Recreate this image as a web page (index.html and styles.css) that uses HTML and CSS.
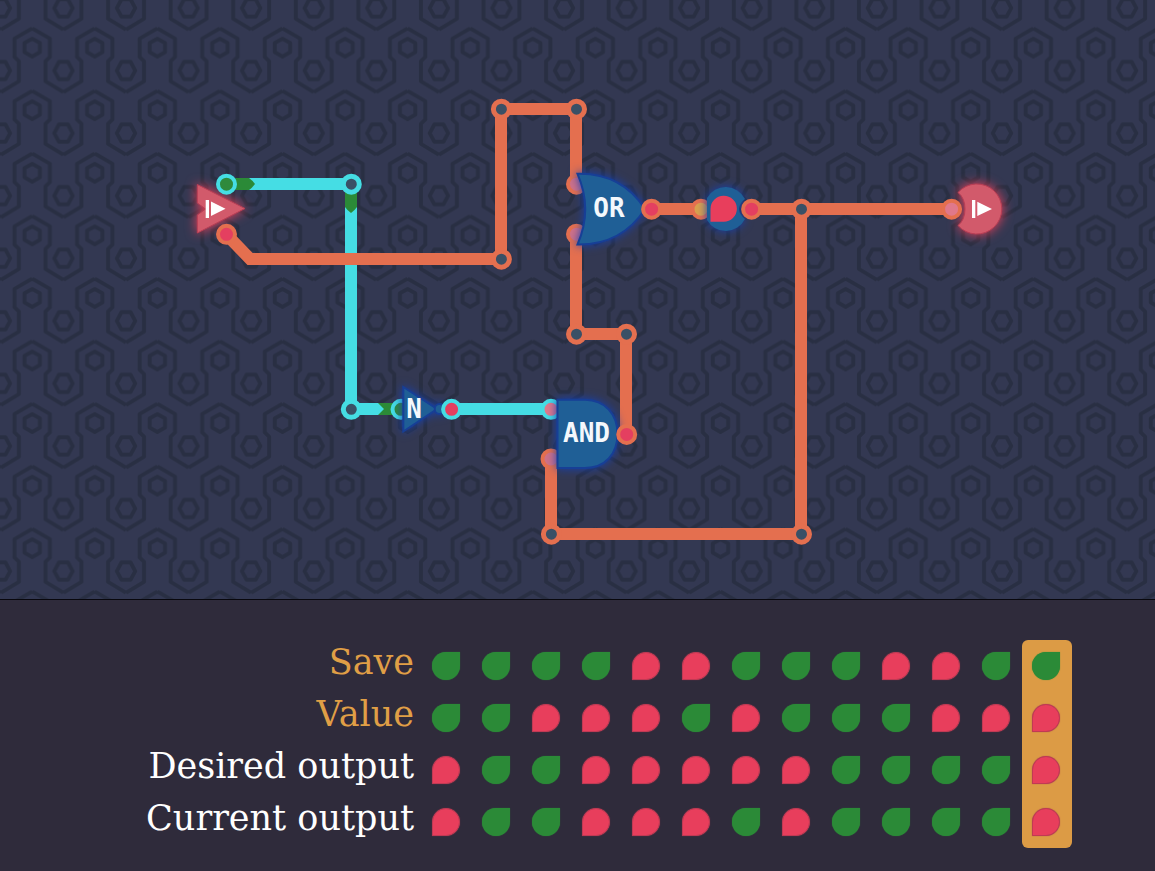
FILE: index.html
```html
<!DOCTYPE html>
<html lang="en">
<head>
<meta charset="utf-8">
<meta name="viewport" content="width=device-width, initial-scale=1">
<title>Circuit</title>
<link rel="stylesheet" href="styles.css">
</head>
<body>
<main class="board">
<svg class="circuit" viewBox="0 0 1155 599" preserveAspectRatio="xMidYMid slice" role="img" aria-label="Logic circuit">
  <defs>
    <pattern id="hex" x="0.9" y="27.8" width="62.57" height="62.57" patternUnits="userSpaceOnUse">
      <g class="hex-line">
        <path d="M31.3 0.6L49 10.8V29.2L44.6 33.4V53.5L62.57 64.3M31.3 0.6L13.6 10.8V29.2L18 33.4V53.5L0 64.3M44.6 -9.1L62.57 1.7M18 -9.1L0 1.7M31.3 63.2L13.6 73.4M31.3 63.2L49 73.4"/>
        <path d="M31.3 11L39 15.2V24.4L31.3 28.8L23.6 24.4V15.2Z"/>
        <path d="M-4 34H4.500L9.200 42.800L4.500 51.500H-4M66.570 34H58.070L53.370 42.800L58.070 51.500H66.570"/>
      </g>
    </pattern>
  </defs>
  <rect class="backdrop" x="-1000" y="-1000" width="3155" height="2599"/>
  <rect x="-1000" y="-1000" width="3155" height="2599" fill="url(#hex)"/>

  <g class="wire cyan">
    <path d="M226 184H351V409H401"/>
    <path d="M451 409H551"/>
  </g>
  <g class="signal">
    <path d="M234 178H249Q252 180 255 184Q252 188 249 190H234Z"/>
    <path d="M345 192H357V207Q355 210 351 213Q347 210 345 207Z"/>
    <path d="M378 403H396V415H378L384 409Z"/>
  </g>
  <g class="wire orange">
    <path d="M226 234L250 259H501V109H576V184"/>
    <path d="M576 234V334H626V434"/>
    <path d="M651 209H701M751 209H951"/>
    <path d="M551 459V534H801V209"/>
  </g>

  <g class="node cyan">
    <circle class="joint" cx="351.3" cy="184.2" r="8"/>
    <circle class="joint" cx="351.3" cy="409.3" r="8"/>
  </g>
  <g class="node port cyan">
    <circle class="off" cx="401" cy="409.3" r="8.5"/>
    <circle class="pale" cx="551" cy="409.3" r="8.5"/>
  </g>
  <g class="node orange">
    <circle class="joint" cx="501.4" cy="259.2" r="8"/>
    <circle class="joint" cx="501.4" cy="109.2" r="8"/>
    <circle class="joint" cx="576.5" cy="109.2" r="8"/>
    <circle class="joint" cx="576.5" cy="334.2" r="8"/>
    <circle class="joint" cx="626.5" cy="334.2" r="8"/>
    <circle class="joint" cx="801.5" cy="209.2" r="8"/>
    <circle class="joint" cx="801.5" cy="534.2" r="8"/>
    <circle class="joint" cx="551.4" cy="534.2" r="8"/>
  </g>
  <g class="node port orange">
    <circle class="lilac" cx="576.5" cy="184.2" r="8.5"/>
    <circle class="lilac" cx="576.5" cy="234.2" r="8.5"/>
    <circle class="lilac" cx="551" cy="459" r="8.5"/>
    <circle class="amber" cx="701" cy="209.2" r="8.5"/>
  </g>

  <g class="terminal">
    <path d="M197.3 184.5L245 208.5L197.3 233V215L205.5 209L197.3 203Z"/>
    <path d="M958 192.5A25 25 0 1 1 958 225.500Q965 220 965 209Q965 198 958 192.500Z"/>
  </g>
  <g class="play">
    <path d="M205.700 200H209V218H205.700ZM211 201.500V216L225.500 208.800Z"/>
    <path d="M972 200H975.300V218H972ZM977.300 201.800V216L992 208.900Z"/>
  </g>

  <g class="gate">
    <path d="M577.500 173.800C611 173 632 189 645 209C632 229 611 245 577.500 244.500Q593 209 577.500 173.800Z"/>
    <path d="M557.500 399.800H585C605 400 617.500 414 617.500 434S605 468 585 468H557.500Z"/>
    <path d="M403.300 387L437 409L403.300 431.500Z"/>
    <circle cx="439.700" cy="409" r="5"/>
  </g>
  <path class="gate buffer" d="M707 198A21.500 21.500 0 0 1 745 199Q739 204 739 209Q739 214 745 219A21.500 21.500 0 0 1 707 220Z"/>
  <g class="gate-label">
    <text x="609" y="217">OR</text>
    <text x="586.500" y="442">AND</text>
    <text x="414" y="418">N</text>
  </g>
  <path class="value" d="M710.500 221.700V209A13.200 13 0 1 1 723.500 221.700Z"/>

  <g class="node port cyan">
    <circle class="off" cx="226.500" cy="184.200" r="8.500"/>
    <circle class="on" cx="451.600" cy="409.300" r="8.500"/>
  </g>
  <g class="node port orange">
    <circle class="on" cx="226.500" cy="234.300" r="8.500"/>
    <circle class="on" cx="651.600" cy="209.200" r="8.500"/>
    <circle class="on" cx="751.600" cy="209.200" r="8.500"/>
    <circle class="on" cx="626.700" cy="434.400" r="8.500"/>
    <circle class="pale" cx="951.600" cy="209.200" r="8.500"/>
  </g>
</svg>
</main>

<section class="results">
<table class="truth">
  <tbody id="truth-rows"></tbody>
</table>
</section>
<script src="table.js"></script>
</body>
</html>
```

FILE: styles.css
```css
* {
  box-sizing: border-box;
}

body {
  margin: 0;
  min-height: 100vh;
  display: flex;
  flex-direction: column;
  background: #2f2b3b;
}

.board {
  flex: 1 1 0;
  min-height: 320px;
  display: grid;
  background: #333852;
  border-bottom: 1px solid #08070d;
  overflow: hidden;
}

.circuit {
  width: 100%;
  height: 100%;
  min-height: 0;
  display: block;
}

.backdrop {
  fill: #333852;
}

.hex-line {
  fill: none;
  stroke: #292f43;
  stroke-width: 4;
  stroke-linejoin: round;
}

.wire {
  fill: none;
  stroke-width: 12;
}

.cyan {
  stroke: #45dde4;
}

.orange {
  stroke: #e46f4f;
}

.signal {
  fill: #2b8a37;
}

.node {
  stroke-width: 5;
}

.port {
  stroke-width: 4;
}

.joint {
  fill: #3a5066;
}

.off {
  fill: #2f8a3c;
}

.on {
  fill: #e43f60;
}

.pale {
  fill: #e0788a;
}

.lilac {
  fill: #cf7188;
}

.amber {
  fill: #d8a04e;
}

.terminal {
  fill: #d25a6b;
  stroke: #b83f55;
  stroke-width: 1;
  filter: drop-shadow(0 0 6px #f0405a);
}

.play {
  fill: #ffffff;
}

.gate {
  fill: #1f5f96;
  stroke: #173f96;
  stroke-width: 2;
  filter: drop-shadow(0 0 5px #1640b0);
}

.buffer {
  stroke-width: 0;
}

.gate-label {
  fill: #f4f8fc;
  font-family: "DejaVu Sans Mono", monospace;
  font-size: 26px;
  font-weight: 700;
  text-anchor: middle;
}

.value {
  fill: #e83e5c;
}

.results {
  display: flex;
  justify-content: flex-end;
  padding: 40px 83px 23px 16px;
  background: #2f2b3b;
}

.truth {
  border-collapse: separate;
  border-spacing: 0;
}

.truth th {
  height: 52px;
  padding: 0 8px 0 0;
  color: #ffffff;
  font-family: "Roboto Slab", "DejaVu Serif", serif;
  font-size: 35px;
  font-weight: 400;
  line-height: 44px;
  text-align: right;
  vertical-align: top;
  white-space: nowrap;
}

.truth .input th {
  color: #e09f46;
}

.truth td {
  width: 50px;
  height: 52px;
  padding: 0 0 0 10px;
}

.truth td:last-child {
  background: #dc9b45;
}

.truth tr:first-child td:last-child {
  border-radius: 6px 6px 0 0;
}

.truth tr:last-child td:last-child {
  border-radius: 0 0 6px 6px;
}

.drop {
  display: block;
  width: 28px;
  height: 28px;
}

.drop.low {
  background: #2b8a37;
  border-radius: 50% 0 50% 50%;
  box-shadow: 0 0 1px #2b8a37;
}

.drop.high {
  background: #e83e5c;
  border: 1px solid #c03a54;
  border-radius: 50% 50% 50% 0;
  box-shadow: 0 0 1px #a03a50;
}
```

FILE: table.js
```js
const rows = [
  { label: "Save", kind: "input", bits: "0000110001100" },
  { label: "Value", kind: "input", bits: "0011101000111" },
  { label: "Desired output", kind: "output", bits: "1001111100001" },
  { label: "Current output", kind: "output", bits: "1001110100001" }
];

const body = document.getElementById("truth-rows");

for (const row of rows) {
  const tr = document.createElement("tr");
  tr.className = row.kind;
  const th = document.createElement("th");
  th.scope = "row";
  th.textContent = row.label;
  tr.append(th);
  for (const bit of row.bits) {
    const td = document.createElement("td");
    const drop = document.createElement("span");
    drop.className = bit === "1" ? "drop high" : "drop low";
    drop.setAttribute("role", "img");
    drop.setAttribute("aria-label", bit === "1" ? "on" : "off");
    td.append(drop);
    tr.append(td);
  }
  body.append(tr);
}
```
